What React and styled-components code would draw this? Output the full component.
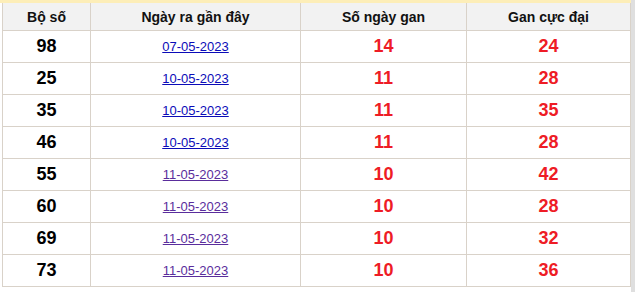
import React from "react";
import styled, { createGlobalStyle } from "styled-components";

const GlobalStyle = createGlobalStyle`
  html, body {
    margin: 0;
    padding: 0;
    background: #ffffff;
  }
`;

const Page = styled.div`
  display: flex;
  width: 635px;
  height: 292px;
  overflow: hidden;
  font-family: "Liberation Sans", Arial, sans-serif;
`;

const Main = styled.div`
  flex: 1;
  display: flex;
  flex-direction: column;
`;

const TopStrip = styled.div`
  height: 3px;
  background: #fdeeb8;
`;

const Scrollbar = styled.div`
  width: 5px;
  background: #dfdfdf;
`;

const Table = styled.table`
  margin-left: 2px;
  width: 628px;
  border-collapse: collapse;
  table-layout: fixed;
`;

const HeadCell = styled.th`
  height: 27px;
  padding: 0;
  background: #f2f2f2;
  border: 1px solid #d9d2c9;
  border-top: none;
  font-size: 14px;
  font-weight: bold;
  color: #111;
  text-align: center;
`;

const Cell = styled.td`
  height: 31px;
  padding: 0;
  border: 1px solid #d9d2c9;
  text-align: center;
  font-size: ${({ $small }) => ($small ? "13px" : "18px")};
  font-weight: ${({ $small }) => ($small ? "normal" : "bold")};
  color: ${({ $red }) => ($red ? "#ee1c25" : "#000")};
`;

const DateLink = styled.a`
  color: ${({ $visited }) => ($visited ? "#5a2d9c" : "#0b0bb8")};
  text-decoration: underline;
`;

const rows = [
  { num: "98", date: "07-05-2023", gan: 14, max: 24 },
  { num: "25", date: "10-05-2023", gan: 11, max: 28 },
  { num: "35", date: "10-05-2023", gan: 11, max: 35 },
  { num: "46", date: "10-05-2023", gan: 11, max: 28 },
  { num: "55", date: "11-05-2023", gan: 10, max: 42 },
  { num: "60", date: "11-05-2023", gan: 10, max: 28 },
  { num: "69", date: "11-05-2023", gan: 10, max: 32 },
  { num: "73", date: "11-05-2023", gan: 10, max: 36 },
];

export default function App() {
  return (
    <Page>
      <GlobalStyle />
      <Main>
        <TopStrip />
        <Table>
          <colgroup>
            <col style={{ width: 88 }} />
            <col style={{ width: 210 }} />
            <col style={{ width: 166 }} />
            <col style={{ width: 164 }} />
          </colgroup>
          <thead>
            <tr>
              <HeadCell>Bộ số</HeadCell>
              <HeadCell>Ngày ra gần đây</HeadCell>
              <HeadCell>Số ngày gan</HeadCell>
              <HeadCell>Gan cực đại</HeadCell>
            </tr>
          </thead>
          <tbody>
            {rows.map((r, i) => (
              <tr key={i}>
                <Cell>{r.num}</Cell>
                <Cell $small>
                  <DateLink href="#" $visited={r.date.startsWith("11")}>
                    {r.date}
                  </DateLink>
                </Cell>
                <Cell $red>{r.gan}</Cell>
                <Cell $red>{r.max}</Cell>
              </tr>
            ))}
          </tbody>
        </Table>
      </Main>
      <Scrollbar />
    </Page>
  );
}
